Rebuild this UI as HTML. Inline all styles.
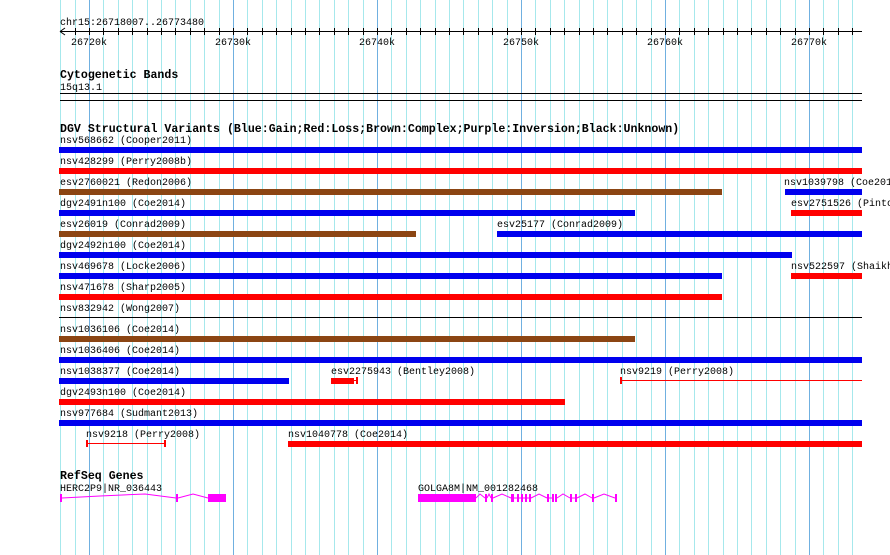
<!DOCTYPE html>
<html><head><meta charset="utf-8"><style>
html,body{margin:0;padding:0;background:#fff;}
svg{display:block;}
text{font-family:"Liberation Mono",monospace;font-size:10px;fill:#000;}
.b{font-weight:bold;font-size:11.6px;}
</style></head><body>
<svg width="890" height="555" viewBox="0 0 890 555" xmlns="http://www.w3.org/2000/svg" shape-rendering="crispEdges">
<path stroke="#a6e8ec" stroke-width="1" d="M60.5 0V555M75.5 0V555M103.5 0V555M118.5 0V555M132.5 0V555M147.5 0V555M161.5 0V555M175.5 0V555M190.5 0V555M204.5 0V555M219.5 0V555M247.5 0V555M262.5 0V555M276.5 0V555M291.5 0V555M305.5 0V555M319.5 0V555M334.5 0V555M348.5 0V555M363.5 0V555M391.5 0V555M406.5 0V555M420.5 0V555M435.5 0V555M449.5 0V555M463.5 0V555M478.5 0V555M492.5 0V555M507.5 0V555M535.5 0V555M550.5 0V555M564.5 0V555M579.5 0V555M593.5 0V555M607.5 0V555M622.5 0V555M636.5 0V555M651.5 0V555M679.5 0V555M694.5 0V555M708.5 0V555M723.5 0V555M737.5 0V555M751.5 0V555M766.5 0V555M780.5 0V555M795.5 0V555M823.5 0V555M838.5 0V555M852.5 0V555"/>
<path stroke="#70b0e0" stroke-width="1" d="M89.5 0V555M233.5 0V555M377.5 0V555M521.5 0V555M665.5 0V555M809.5 0V555"/>

<text x="60" y="25">chr15:26718007..26773480</text>
<rect x="60" y="31" width="802" height="1" fill="#000"/>
<path d="M60 31.5 L65 28 M60 31.5 L65 35" stroke="#000" fill="none" shape-rendering="auto"/>
<path stroke="#000" d="M75.5 28V35M89.5 28V35M103.5 28V35M118.5 28V35M132.5 28V35M147.5 28V35M161.5 28V35M175.5 28V35M190.5 28V35M204.5 28V35M219.5 28V35M233.5 28V35M247.5 28V35M262.5 28V35M276.5 28V35M291.5 28V35M305.5 28V35M319.5 28V35M334.5 28V35M348.5 28V35M363.5 28V35M377.5 28V35M391.5 28V35M406.5 28V35M420.5 28V35M435.5 28V35M449.5 28V35M463.5 28V35M478.5 28V35M492.5 28V35M507.5 28V35M521.5 28V35M535.5 28V35M550.5 28V35M564.5 28V35M579.5 28V35M593.5 28V35M607.5 28V35M622.5 28V35M636.5 28V35M651.5 28V35M665.5 28V35M679.5 28V35M694.5 28V35M708.5 28V35M723.5 28V35M737.5 28V35M751.5 28V35M766.5 28V35M780.5 28V35M795.5 28V35M809.5 28V35M823.5 28V35M838.5 28V35M852.5 28V35"/>
<text x="71" y="45">26720k</text><text x="215" y="45">26730k</text><text x="359" y="45">26740k</text><text x="503" y="45">26750k</text><text x="647" y="45">26760k</text><text x="791" y="45">26770k</text>

<text class="b" x="60" y="78">Cytogenetic Bands</text>
<text x="60" y="90">15q13.1</text>
<rect x="60" y="93" width="802" height="1" fill="#000"/>
<rect x="60" y="100" width="802" height="1" fill="#000"/>

<text class="b" x="60" y="132">DGV Structural Variants (Blue:Gain;Red:Loss;Brown:Complex;Purple:Inversion;Black:Unknown)</text>

<text x="60" y="143">nsv568662 (Cooper2011)</text><rect x="59" y="147" width="803" height="6" fill="#0000ee"/>
<text x="60" y="164">nsv428299 (Perry2008b)</text><rect x="59" y="168" width="803" height="6" fill="#ff0000"/>
<text x="60" y="185">esv2760021 (Redon2006)</text><rect x="59" y="189" width="663" height="6" fill="#8b4513"/>
<text x="784" y="185">nsv1039798 (Coe2014)</text><rect x="785" y="189" width="77" height="6" fill="#0000ee"/>
<text x="60" y="206">dgv2491n100 (Coe2014)</text><rect x="59" y="210" width="576" height="6" fill="#0000ee"/>
<text x="791" y="206">esv2751526 (Pinto</text><rect x="791" y="210" width="71" height="6" fill="#ff0000"/>
<text x="60" y="227">esv26019 (Conrad2009)</text><rect x="59" y="231" width="357" height="6" fill="#8b4513"/>
<text x="497" y="227">esv25177 (Conrad2009)</text><rect x="497" y="231" width="365" height="6" fill="#0000ee"/>
<text x="60" y="248">dgv2492n100 (Coe2014)</text><rect x="59" y="252" width="733" height="6" fill="#0000ee"/>
<text x="60" y="269">nsv469678 (Locke2006)</text><rect x="59" y="273" width="663" height="6" fill="#0000ee"/>
<text x="791" y="269">nsv522597 (Shaikh</text><rect x="791" y="273" width="71" height="6" fill="#ff0000"/>
<text x="60" y="290">nsv471678 (Sharp2005)</text><rect x="59" y="294" width="663" height="6" fill="#ff0000"/>
<text x="60" y="311">nsv832942 (Wong2007)</text><rect x="59" y="317" width="803" height="1" fill="#000"/>
<text x="60" y="332">nsv1036106 (Coe2014)</text><rect x="59" y="336" width="576" height="6" fill="#8b4513"/>
<text x="60" y="353">nsv1036406 (Coe2014)</text><rect x="59" y="357" width="803" height="6" fill="#0000ee"/>
<text x="60" y="374">nsv1038377 (Coe2014)</text><rect x="59" y="378" width="230" height="6" fill="#0000ee"/>
<text x="331" y="374">esv2275943 (Bentley2008)</text><rect x="331" y="378" width="23" height="6" fill="#ff0000"/><rect x="354" y="380" width="3" height="1" fill="#ff0000"/><rect x="356" y="377" width="2" height="7" fill="#ff0000"/>
<text x="620" y="374">nsv9219 (Perry2008)</text><rect x="620" y="377" width="2" height="7" fill="#ff0000"/><rect x="620" y="380" width="242" height="1" fill="#ff0000"/>
<text x="60" y="395">dgv2493n100 (Coe2014)</text><rect x="59" y="399" width="506" height="6" fill="#ff0000"/>
<text x="60" y="416">nsv977684 (Sudmant2013)</text><rect x="59" y="420" width="803" height="6" fill="#0000ee"/>
<text x="86" y="437">nsv9218 (Perry2008)</text><rect x="86" y="440" width="2" height="7" fill="#ff0000"/><rect x="86" y="443" width="79" height="1" fill="#ff0000"/><rect x="164" y="440" width="2" height="7" fill="#ff0000"/>
<text x="288" y="437">nsv1040778 (Coe2014)</text><rect x="288" y="441" width="574" height="6" fill="#ff0000"/>

<text class="b" x="60" y="479">RefSeq Genes</text>
<text x="60" y="491">HERC2P9|NR_036443</text>
<g fill="#ff00ff" stroke="none">
<rect x="60" y="494" width="2" height="8"/><rect x="176" y="494" width="2" height="8"/><rect x="208" y="494" width="18" height="8"/>
<rect x="418" y="494" width="58" height="8"/>
<rect x="485" y="494" width="2" height="8"/><rect x="491" y="494" width="2" height="8"/><rect x="511" y="494" width="3" height="8"/><rect x="517" y="494" width="2" height="8"/><rect x="521" y="494" width="2" height="8"/><rect x="525" y="494" width="2" height="8"/><rect x="529" y="494" width="2" height="8"/><rect x="547" y="494" width="2" height="8"/><rect x="552" y="494" width="2" height="8"/><rect x="555" y="494" width="2" height="8"/><rect x="570" y="494" width="2" height="8"/><rect x="575" y="494" width="2" height="8"/><rect x="592" y="494" width="2" height="8"/><rect x="615" y="494" width="2" height="8"/>
</g>
<g stroke="#ff00ff" fill="none" stroke-width="1" shape-rendering="auto">
<path d="M62 498 L100 496 L145 494 L176 498"/><path d="M178 498 L193 494 L208 498"/>
<path d="M476 498 L480 494 L485 498 M487 498 L489 494 L491 498 M493 498 L502 494 L511 498 M514 498 L517 498 M519 498 L521 498 M523 498 L525 498 M527 498 L529 498 M531 498 L539 494 L547 498 M549 498 L552 498 M557 498 L563 494 L570 498 M572 498 L575 498 M577 498 L585 494 L592 498 M594 498 L604 494 L615 498"/>
</g>
<text x="418" y="491">GOLGA8M|NM_001282468</text>
</svg>
</body></html>
